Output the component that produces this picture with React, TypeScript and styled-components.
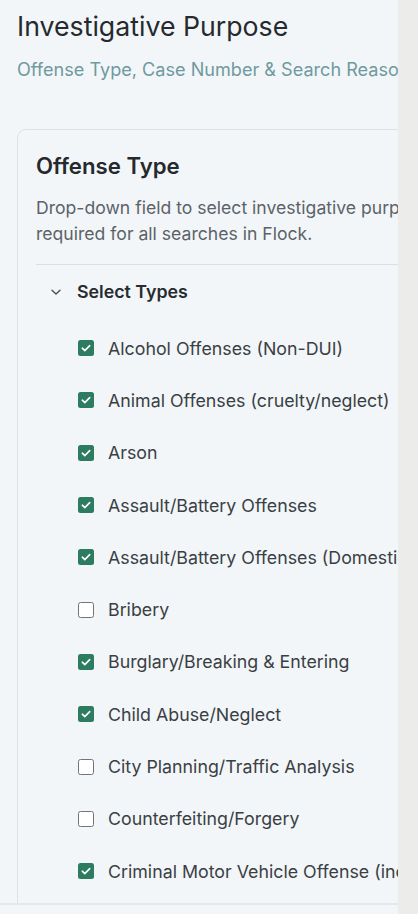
import React, { useState } from "react";
import styled, { createGlobalStyle } from "styled-components";

const GlobalStyle = createGlobalStyle`
  html, body {
    margin: 0;
    padding: 0;
    background: #ececeb;
  }
  body {
    font-family: Inter, "Noto Sans", sans-serif;
    -webkit-font-smoothing: antialiased;
  }
`;

const Layout = styled.div`
  display: flex;
  width: 418px;
  height: 914px;
  overflow: hidden;
`;

const Main = styled.main`
  width: 398px;
  flex: none;
  display: flex;
  flex-direction: column;
  background: #f2f6f9;
  overflow: hidden;
`;

const Scroll = styled.div`
  flex: 1;
  overflow: hidden;
  padding: 9px 0 0 17px;
`;

const Heading = styled.h1`
  margin: 0;
  font-size: 26.7px;
  font-weight: 400;
  line-height: 34px;
  color: #262a2e;
  white-space: nowrap;
`;

const Subheading = styled.p`
  margin: 15px 0 0;
  font-size: 18.1px;
  line-height: 22px;
  color: #6f9a9f;
  white-space: nowrap;
`;

const Card = styled.section`
  margin-top: 49px;
  width: 440px;
  border: 1px solid #dde2e6;
  border-radius: 9px;
  padding: 22px 0 0 18px;
  box-sizing: border-box;
  min-height: 820px;
`;

const CardTitle = styled.h2`
  margin: 0;
  font-size: 22.2px;
  font-weight: 600;
  line-height: 28px;
  color: #25292d;
`;

const CardText = styled.p`
  margin: 15px 0 0;
  font-size: 17.6px;
  line-height: 26px;
  color: #5c6268;
  white-space: pre;
`;

const Divider = styled.hr`
  margin: 17px 0 0;
  border: none;
  border-top: 1px solid #dadfe3;
`;

const GroupHeader = styled.button`
  display: flex;
  align-items: center;
  gap: 14px;
  margin: 13px 0 0 13px;
  padding: 0;
  border: none;
  background: none;
  font-family: inherit;
  font-size: 17.8px;
  font-weight: 600;
  line-height: 28px;
  color: #282c30;
  cursor: pointer;
`;

const OptionList = styled.ul`
  list-style: none;
  margin: 16px 0 0;
  padding: 0 0 0 42px;
  display: flex;
  flex-direction: column;
`;

const Option = styled.li`
  display: flex;
  align-items: center;
  gap: 14px;
  height: 52.3px;
  font-size: 17.8px;
  color: #3a3f44;
  white-space: nowrap;
  cursor: pointer;
`;

const Box = styled.span<{ $checked: boolean }>`
  width: 16px;
  height: 16px;
  flex: none;
  box-sizing: border-box;
  border-radius: 2.5px;
  display: flex;
  align-items: center;
  justify-content: center;
  background: ${(p) => (p.$checked ? "#2d7c60" : "#ffffff")};
  border: ${(p) => (p.$checked ? "none" : "1.5px solid #6f757b")};
`;

const Footer = styled.div`
  height: 9px;
  flex: none;
  border-top: 2px solid #e2e7eb;
  background: #f2f6f9;
`;

const Gutter = styled.div`
  flex: 1;
  background: #ececeb;
`;

const offenses = [
  { label: "Alcohol Offenses (Non-DUI)", checked: true },
  { label: "Animal Offenses (cruelty/neglect)", checked: true },
  { label: "Arson", checked: true },
  { label: "Assault/Battery Offenses", checked: true },
  { label: "Assault/Battery Offenses (Domestic Violence)", checked: true },
  { label: "Bribery", checked: false },
  { label: "Burglary/Breaking & Entering", checked: true },
  { label: "Child Abuse/Neglect", checked: true },
  { label: "City Planning/Traffic Analysis", checked: false },
  { label: "Counterfeiting/Forgery", checked: false },
  { label: "Criminal Motor Vehicle Offense (including DUI)", checked: true },
];

const Chevron = () => (
  <svg width="14" height="14" viewBox="0 0 14 14" fill="none">
    <path d="M3 5.2 7 9 11 5.2" stroke="#4a4f55" strokeWidth="1.4" strokeLinecap="round" strokeLinejoin="round" />
  </svg>
);

const Check = () => (
  <svg width="12" height="12" viewBox="0 0 12 12" fill="none">
    <path d="M2.3 6.2 4.8 8.6 9.7 3.6" stroke="#fff" strokeWidth="1.6" strokeLinecap="round" strokeLinejoin="round" />
  </svg>
);

const App: React.FC = () => {
  const [items, setItems] = useState(offenses);
  const [open, setOpen] = useState(true);

  const toggle = (index: number) => {
    setItems(items.map((item, i) => (i === index ? { ...item, checked: !item.checked } : item)));
  };

  return (
    <Layout>
      <GlobalStyle />
      <Main>
        <Scroll>
          <Heading>Investigative Purpose</Heading>
          <Subheading>Offense Type, Case Number &amp; Search Reason</Subheading>
          <Card>
            <CardTitle>Offense Type</CardTitle>
            <CardText>
              {"Drop-down field to select investigative purpose\nrequired for all searches in Flock."}
            </CardText>
            <Divider />
            <GroupHeader onClick={() => setOpen(!open)}>
              <Chevron />
              Select Types
            </GroupHeader>
            {open && (
              <OptionList>
                {items.map((item, i) => (
                  <Option key={item.label} onClick={() => toggle(i)}>
                    <Box $checked={item.checked}>{item.checked && <Check />}</Box>
                    {item.label}
                  </Option>
                ))}
              </OptionList>
            )}
          </Card>
        </Scroll>
        <Footer />
      </Main>
      <Gutter />
    </Layout>
  );
};

export default App;
